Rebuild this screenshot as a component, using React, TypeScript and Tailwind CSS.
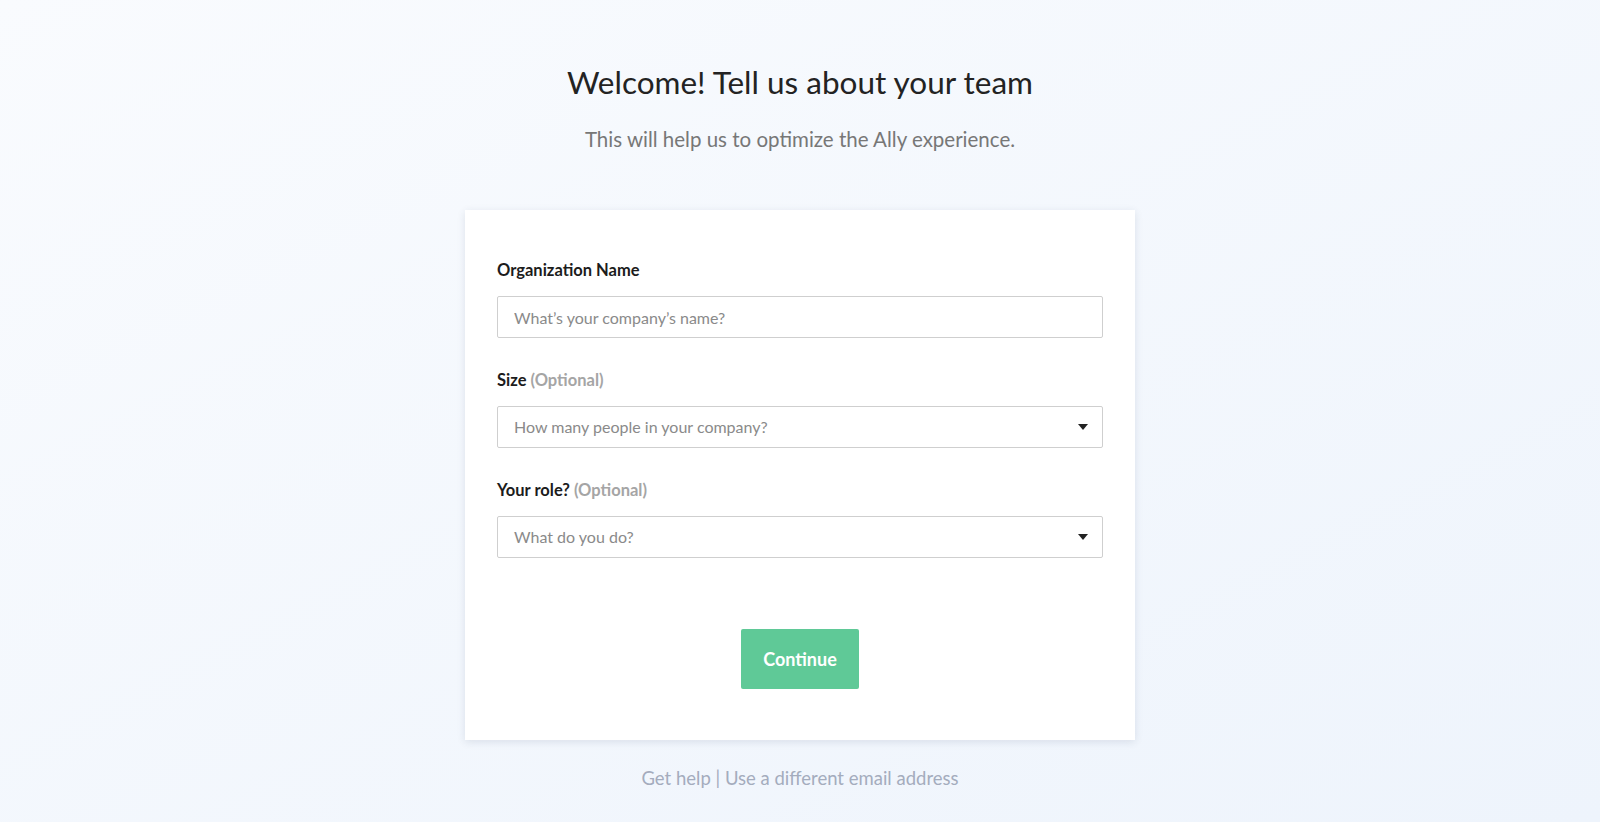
import { useState } from "react"

function Caret() {
  return (
    <svg width="10" height="6" viewBox="0 0 10 6" className="shrink-0">
      <path d="M0 0h10L5 6z" fill="#222" />
    </svg>
  )
}

function SelectBox({ placeholder }: { placeholder: string }) {
  return (
    <div className="flex h-[42px] w-full items-center justify-between rounded-[2px] border border-[#cfcfcf] bg-white pl-4 pr-[14px]">
      <span className="text-[16px] text-[#8a8a8a]">{placeholder}</span>
      <Caret />
    </div>
  )
}

export default function App() {
  const [orgName, setOrgName] = useState("")

  return (
    <div
      className="flex min-h-[822px] w-full flex-col items-center bg-gradient-to-br from-[#f9fbfe] to-[#eef4fc] text-[#222]"
      style={{ fontFamily: "Lato, 'Noto Sans', sans-serif" }}
    >
      <h1 className="mt-[62px] text-[31.5px] leading-[40px] text-[#232323]">
        Welcome! Tell us about your team
      </h1>
      <p className="mt-[25px] text-[20.5px] leading-[24px] text-[#777]">
        This will help us to optimize the Ally experience.
      </p>

      <div className="mt-[59px] w-[670px] bg-white px-8 pt-[50px] pb-[51px] shadow-[0_2px_8px_rgba(40,60,90,0.12)]">
        <label className="block text-[16.5px] font-bold leading-5 text-[#1c1c1c]">
          Organization Name
        </label>
        <input
          type="text"
          value={orgName}
          onChange={(e) => setOrgName(e.target.value)}
          placeholder="What’s your company’s name?"
          className="mt-4 h-[42px] w-full rounded-[2px] border border-[#cfcfcf] px-4 text-[16px] text-[#333] outline-none placeholder:text-[#8a8a8a]"
        />

        <label className="mt-8 block text-[16.5px] font-bold leading-5 text-[#1c1c1c]">
          Size <span className="text-[#a5a5a5]">(Optional)</span>
        </label>
        <div className="mt-4">
          <SelectBox placeholder="How many people in your company?" />
        </div>

        <label className="mt-8 block text-[16.5px] font-bold leading-5 text-[#1c1c1c]">
          Your role? <span className="text-[#a5a5a5]">(Optional)</span>
        </label>
        <div className="mt-4">
          <SelectBox placeholder="What do you do?" />
        </div>

        <div className="mt-[71px] flex justify-center">
          <button className="h-[60px] w-[118px] rounded-[2px] bg-[#5fc997] text-[18px] font-bold text-white">
            Continue
          </button>
        </div>
      </div>

      <div className="mt-[26px] text-[18.5px] leading-6 text-[#a4acbd]">
        Get help | Use a different email address
      </div>
    </div>
  )
}
